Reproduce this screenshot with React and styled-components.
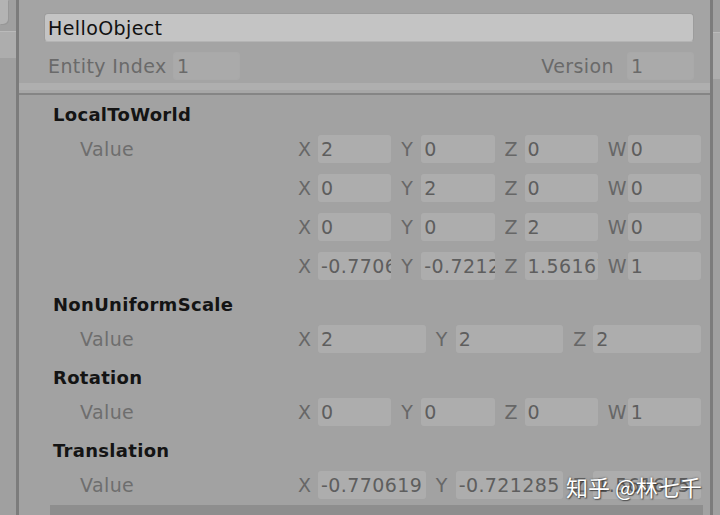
import React from 'react';
import styled, { createGlobalStyle } from 'styled-components';

const GlobalStyle = createGlobalStyle`
  html, body { margin: 0; padding: 0; background: #a1a1a1; }
`;

const inspector = {
  name: 'HelloObject',
  index: '1',
  version: '1',
  components: [
    {
      title: 'LocalToWorld',
      rows: [
        ['2', '0', '0', '0'],
        ['0', '2', '0', '0'],
        ['0', '0', '2', '0'],
        ['-0.770619', '-0.721285', '1.561675', '1'],
      ],
    },
    { title: 'NonUniformScale', rows: [['2', '2', '2']] },
    { title: 'Rotation', rows: [['0', '0', '0', '1']] },
    { title: 'Translation', rows: [['-0.770619', '-0.721285', '1.561675']] },
  ],
};

const AXES = ['X', 'Y', 'Z', 'W'];

export default function App() {
  return (
    <>
      <GlobalStyle />
      <Page>
        <SideStrip $w={16}>
          <TabStub />
          <SideBand $top={7} $h={26} />
        </SideStrip>
        <Divider />
        <Main>
          <Header>
            <NameField>{inspector.name}</NameField>
            <MetaRow>
              <MetaLabel>Entity Index</MetaLabel>
              <MetaField>{inspector.index}</MetaField>
              <span />
              <MetaLabel $gap={13}>Version</MetaLabel>
              <MetaField>{inspector.version}</MetaField>
            </MetaRow>
          </Header>
          <Separator />
          <Body>
            {inspector.components.map((c, ci) => (
              <Section key={c.title} $last={ci === inspector.components.length - 1}>
                <SectionTitle>{c.title}</SectionTitle>
                {c.rows.map((row, ri) => (
                  <FieldRow key={ri}>
                    <RowLabel>{ri === 0 ? 'Value' : ''}</RowLabel>
                    <Vector $n={row.length}>
                      {row.map((v, ai) => (
                        <Axis key={ai}>
                          <AxisLabel>{AXES[ai]}</AxisLabel>
                          <AxisField>{v}</AxisField>
                        </Axis>
                      ))}
                    </Vector>
                  </FieldRow>
                ))}
              </Section>
            ))}
          </Body>
          <BottomBar />
        </Main>
        <Divider />
        <SideStrip $w={7}>
          <SideBand $top={32} $h={46} />
        </SideStrip>
        <Watermark>知乎 @林七千</Watermark>
      </Page>
    </>
  );
}

const Page = styled.div`
  position: relative;
  width: 720px;
  height: 515px;
  display: flex;
  overflow: hidden;
  background: #a2a2a2;
  font-family: "DejaVu Sans", "Liberation Sans", sans-serif;
  font-size: 19px;
  letter-spacing: 0.4px;
`;

// side panels peeking in at the edges
const SideStrip = styled.div`
  width: ${p => p.$w}px;
  flex-shrink: 0;
  display: flex;
  flex-direction: column;
  background: #a0a0a0;
`;

const TabStub = styled.div`
  width: 8px;
  height: 24px;
  background: #b3b3b3;
  border-radius: 0 0 5px 0;
  box-shadow: 1px 1px 0 #979797;
`;

const SideBand = styled.div`
  margin-top: ${p => p.$top}px;
  height: ${p => p.$h}px;
  background: #adadad;
  border-top: 1px solid #bababa;
`;

const Divider = styled.div`
  width: 3px;
  flex-shrink: 0;
  background: #7c7c7c;
`;

const Main = styled.div`
  flex: 1;
  display: flex;
  flex-direction: column;
  min-width: 0;
`;

const Header = styled.div`
  padding: 13px 16px 0 25px;
  background: #a4a4a4;
`;

const NameField = styled.div`
  height: 29px;
  box-sizing: border-box;
  display: flex;
  align-items: center;
  padding-left: 3px;
  background: #c4c4c4;
  border: 1px solid #9c9c9c;
  border-bottom-color: #b4b4b4;
  border-radius: 4px;
  color: #111;
`;

const MetaRow = styled.div`
  margin-top: 10px;
  height: 28px;
  display: grid;
  grid-template-columns: 129px 67px 1fr auto 67px;
  align-items: center;
`;

const MetaLabel = styled.span`
  padding-left: 4px;
  margin-right: ${p => p.$gap || 0}px;
  color: #6a6a6a;
  white-space: nowrap;
`;

const MetaField = styled.div`
  height: 28px;
  box-sizing: border-box;
  display: flex;
  align-items: center;
  padding-left: 3px;
  background: #aaaaaa;
  border: 1px solid #a9a9a9;
  border-radius: 3px;
  color: #6a6a6a;
`;

const Separator = styled.div`
  height: 15px;
  flex-shrink: 0;
  background: linear-gradient(
    #a4a4a4 0 3px,
    #afafaf 3px 10px,
    #a7a7a7 10px 13px,
    #858585 13px
  );
`;

const Body = styled.div`
  padding: 4px 9px 0 0;
  flex-shrink: 0;
`;

const Section = styled.div`
  margin-bottom: ${p => (p.$last ? 0 : 4)}px;
`;

const SectionTitle = styled.div`
  height: 30px;
  display: flex;
  align-items: center;
  padding-left: 34px;
  font-weight: bold;
  font-size: 18px;
  letter-spacing: 0.3px;
  color: #141414;
`;

const FieldRow = styled.div`
  height: 39px;
  display: grid;
  grid-template-columns: 279px 1fr;
  align-items: center;
`;

const RowLabel = styled.span`
  padding-left: 61px;
  color: #6e6e6e;
`;

const Vector = styled.div`
  display: grid;
  grid-template-columns: repeat(${p => p.$n}, minmax(0, 1fr));
  column-gap: 10px;
`;

const Axis = styled.div`
  display: flex;
  align-items: center;
  min-width: 0;
`;

const AxisLabel = styled.span`
  width: 20px;
  flex-shrink: 0;
  color: #676767;
`;

const AxisField = styled.div`
  flex: 1;
  min-width: 0;
  height: 28px;
  box-sizing: border-box;
  display: flex;
  align-items: center;
  padding-left: 3px;
  background: #adadad;
  border-radius: 3px;
  color: #5e5e5e;
  white-space: nowrap;
  overflow: hidden;
`;

const BottomBar = styled.div`
  margin: 1px 7px 0 31px;
  height: 10px;
  background: #8e8e8e;
`;

// zhihu watermark stamped over the bottom right corner
const Watermark = styled.div`
  position: absolute;
  left: 566px;
  top: 470px;
  font-family: "Noto Sans CJK SC", sans-serif;
  font-size: 22px;
  letter-spacing: 0;
  color: #fff;
  text-shadow: 0 0 2px rgba(40, 40, 40, 0.8), 1px 1px 1px rgba(40, 40, 40, 0.6);
  white-space: nowrap;
`;
